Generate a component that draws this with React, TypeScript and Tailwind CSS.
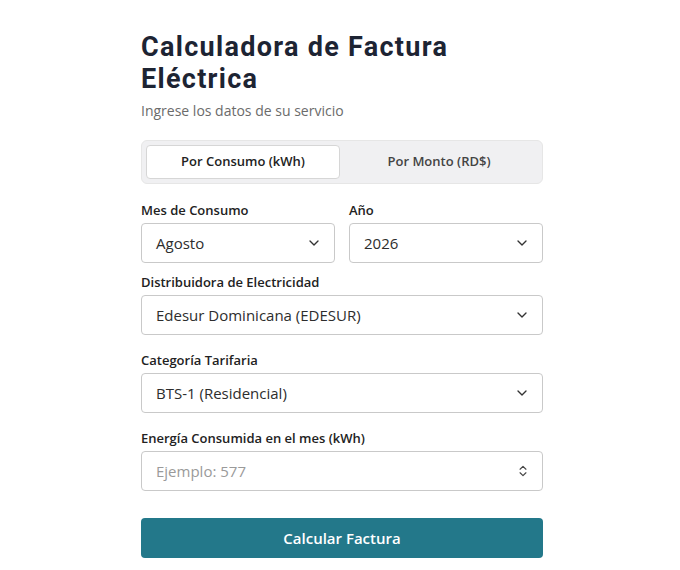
import React from 'react';
import { ChevronDown, ChevronsUpDown } from 'lucide-react';

const font = { fontFamily: '"Open Sans", "DejaVu Sans", sans-serif' };
const titleFont = { fontFamily: 'Roboto, "Open Sans", sans-serif' };

const Select: React.FC<{ value: string }> = ({ value }) => (
  <div className="flex h-[40px] items-center justify-between rounded-[4px] border border-[#c9c9c9] bg-white pl-[14px] pr-[12px] text-[15px] text-[#2d2d2d]">
    <span>{value}</span>
    <ChevronDown size={16} strokeWidth={2} className="text-[#333]" />
  </div>
);

const Label: React.FC<{ children: React.ReactNode }> = ({ children }) => (
  <div className="mb-[5px] text-[13px] font-semibold leading-[16px] text-[#222]">{children}</div>
);

export default function App() {
  return (
    <div className="min-h-[570px] w-[680px] bg-white" style={font}>
      <div className="ml-[141px] w-[402px] pt-[31px]">
        <h1 className="text-[27px] font-bold leading-[32px] tracking-[1.3px] text-[#1d2433]" style={titleFont}>
          Calculadora de Factura
          <br />
          Eléctrica
        </h1>
        <p className="mt-[5px] text-[14px] text-[#6b6b6b]">Ingrese los datos de su servicio</p>

        <div className="mt-[19px] flex h-[44px] rounded-[6px] border border-[#e6e6e6] bg-[#f0f0f2] p-[4px]">
          <div className="flex w-[194px] items-center justify-center rounded-[4px] border border-[#d6d6d6] bg-white text-[13px] font-semibold text-[#222]">
            Por Consumo (kWh)
          </div>
          <div className="flex flex-1 items-center justify-center text-[13px] font-semibold text-[#444]">
            Por Monto (RD$)
          </div>
        </div>

        <div className="mt-[18px] grid grid-cols-2 gap-x-[14px]">
          <div>
            <Label>Mes de Consumo</Label>
            <Select value="Agosto" />
          </div>
          <div>
            <Label>Año</Label>
            <Select value="2026" />
          </div>
        </div>

        <div className="mt-[11px]">
          <Label>Distribuidora de Electricidad</Label>
          <Select value="Edesur Dominicana (EDESUR)" />
        </div>

        <div className="mt-[17px]">
          <Label>Categoría Tarifaria</Label>
          <Select value="BTS-1 (Residencial)" />
        </div>

        <div className="mt-[17px]">
          <Label>Energía Consumida en el mes (kWh)</Label>
          <div className="flex h-[40px] items-center justify-between rounded-[4px] border border-[#c9c9c9] bg-white pl-[14px] pr-[12px] text-[15px] text-[#9a9a9a]">
            <span>Ejemplo: 577</span>
            <ChevronsUpDown size={14} strokeWidth={2} className="text-[#444]" />
          </div>
        </div>

        <button className="mt-[27px] flex h-[40px] w-full items-center justify-center rounded-[4px] bg-[#23788a] text-[15px] font-semibold text-white">
          Calcular Factura
        </button>
      </div>
    </div>
  );
}
